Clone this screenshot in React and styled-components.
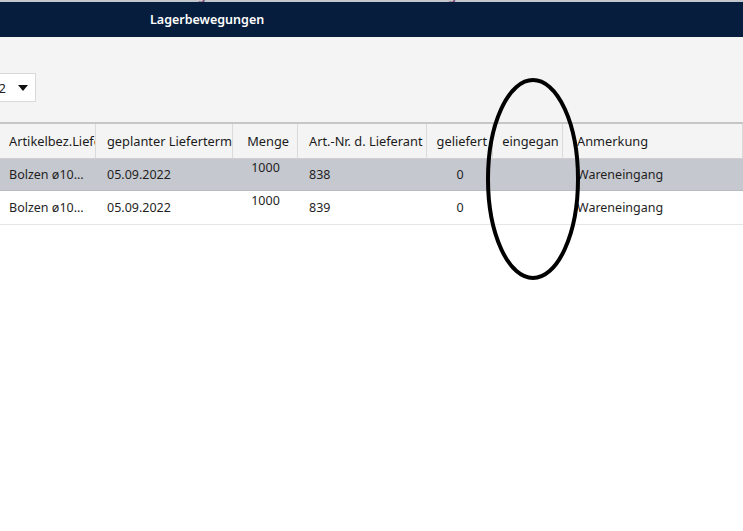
import React from 'react';
import styled, { createGlobalStyle } from 'styled-components';

const GlobalStyle = createGlobalStyle`
  html, body {
    margin: 0;
    padding: 0;
    background: #ffffff;
    overflow: hidden;
  }
  body {
    font-family: "Noto Sans", "Open Sans", "Liberation Sans", sans-serif;
    font-size: 12.5px;
    color: #1f1f1f;
  }
`;

const Page = styled.div`
  position: relative;
  width: 743px;
  height: 531px;
  overflow: hidden;
  background: #ffffff;
`;

// Reste der Menüzeile, die oben aus dem Fenster ragt
const MenuStrip = styled.div`
  height: 2px;
  overflow: hidden;
  background: #c3c6cb;
  display: flex;
`;

const MenuText = styled.span`
  margin-top: -12px;
  margin-left: ${(p) => p.$left}px;
  font-size: 13px;
  line-height: 14px;
  font-weight: 600;
  color: #7a4a74;
  white-space: nowrap;
`;

const TitleBar = styled.div`
  height: 35px;
  background: #061d3d;
  display: flex;
  align-items: center;
  padding-left: 150px;
`;

const Title = styled.span`
  color: #ffffff;
  font-size: 12.5px;
  font-weight: 600;
`;

const Toolbar = styled.div`
  height: 85px;
  background: #f4f4f4;
  box-sizing: border-box;
  padding-top: 36px;
`;

const SelectBox = styled.div`
  width: 80px;
  height: 29px;
  margin-left: -44px;
  box-sizing: border-box;
  background: #ffffff;
  border: 1px solid #d9d9d9;
  display: flex;
  align-items: center;
  justify-content: flex-end;
  gap: 12px;
  padding-right: 7px;
  font-size: 13px;
  color: #222;
`;

const Caret = styled.span`
  width: 0;
  height: 0;
  border-left: 5px solid transparent;
  border-right: 5px solid transparent;
  border-top: 6px solid #111;
`;

const Grid = styled.div`
  display: grid;
  grid-template-columns: 96px 137px 65px 129px 66px 70px 1fr;
  border-top: 2px solid #c6c6c6;
`;

const justify = { left: 'flex-start', center: 'center', right: 'flex-end' };

const HeadCell = styled.div`
  height: 35px;
  box-sizing: border-box;
  display: flex;
  align-items: center;
  justify-content: ${(p) => justify[p.$align]};
  padding: 0 ${(p) => p.$right}px 0 ${(p) => p.$left}px;
  background: #f4f4f4;
  border-right: 1px solid #dadada;
  border-bottom: 1px solid #cfcfcf;
  white-space: nowrap;
  overflow: hidden;
  font-size: 12.8px;
  color: #1b1b1b;
  &:last-child {
    border-right: none;
  }
`;

const Cell = styled.div`
  height: ${(p) => p.$h}px;
  box-sizing: border-box;
  display: flex;
  align-items: center;
  justify-content: ${(p) => (p.$center ? 'center' : 'flex-start')};
  padding-left: ${(p) => (p.$center ? 0 : p.$pad ?? 11)}px;
  padding-bottom: ${(p) => (p.$raise ? 14 : 0)}px;
  background: ${(p) => (p.$selected ? '#c6c8cf' : '#ffffff')};
  border-bottom: 1px solid ${(p) => (p.$selected ? '#b9bbc2' : '#e6e6e6')};
  white-space: nowrap;
  overflow: hidden;
  color: #1f1f1f;
`;

const Ellipsis = styled.span`
  overflow: hidden;
  text-overflow: ellipsis;
  max-width: 76px;
`;

const Marker = styled.svg`
  position: absolute;
  left: 484px;
  top: 77px;
  pointer-events: none;
`;

const columns = [
  { label: 'Artikelbez.Lieferant', align: 'left', left: 9, right: 0 },
  { label: 'geplanter Liefertermin', align: 'left', left: 11, right: 0 },
  { label: 'Menge', align: 'right', left: 0, right: 8 },
  { label: 'Art.-Nr. d. Lieferant', align: 'left', left: 11, right: 0 },
  { label: 'geliefert', align: 'right', left: 0, right: 5 },
  { label: 'eingegan', align: 'center', left: 6, right: 0 },
  { label: 'Anmerkung', align: 'left', left: 14, right: 0 },
];

const rows = [
  { name: 'Bolzen ø10 x 40', date: '05.09.2022', qty: '1000', nr: '838', done: '0', note: 'Wareneingang' },
  { name: 'Bolzen ø10 x 40', date: '05.09.2022', qty: '1000', nr: '839', done: '0', note: 'Wareneingang' },
];

export default function App() {
  return (
    <Page>
      <GlobalStyle />
      <MenuStrip>
        <MenuText $left={124}>Artikel &amp; Lager</MenuText>
        <MenuText $left={160}>Auswertungen</MenuText>
      </MenuStrip>
      <TitleBar>
        <Title>Lagerbewegungen</Title>
      </TitleBar>
      <Toolbar>
        <SelectBox>
          <span>2022</span>
          <Caret />
        </SelectBox>
      </Toolbar>
      <Grid>
        {columns.map((c) => (
          <HeadCell key={c.label} $align={c.align} $left={c.left} $right={c.right}>
            {c.label}
          </HeadCell>
        ))}
        {rows.map((r, i) => {
          const sel = i === 0;
          const h = i === 0 ? 32 : 34;
          return (
            <React.Fragment key={r.nr}>
              <Cell $h={h} $selected={sel} $pad={9}>
                <Ellipsis>{r.name}</Ellipsis>
              </Cell>
              <Cell $h={h} $selected={sel}>{r.date}</Cell>
              <Cell $h={h} $selected={sel} $center $raise>{r.qty}</Cell>
              <Cell $h={h} $selected={sel}>{r.nr}</Cell>
              <Cell $h={h} $selected={sel} $center>{r.done}</Cell>
              <Cell $h={h} $selected={sel} $center />
              <Cell $h={h} $selected={sel} $pad={14}>{r.note}</Cell>
            </React.Fragment>
          );
        })}
      </Grid>
      <Marker width="100" height="206" viewBox="0 0 100 206">
        <ellipse cx="49" cy="102" rx="45" ry="99" fill="none" stroke="#000" strokeWidth="4" />
      </Marker>
    </Page>
  );
}
